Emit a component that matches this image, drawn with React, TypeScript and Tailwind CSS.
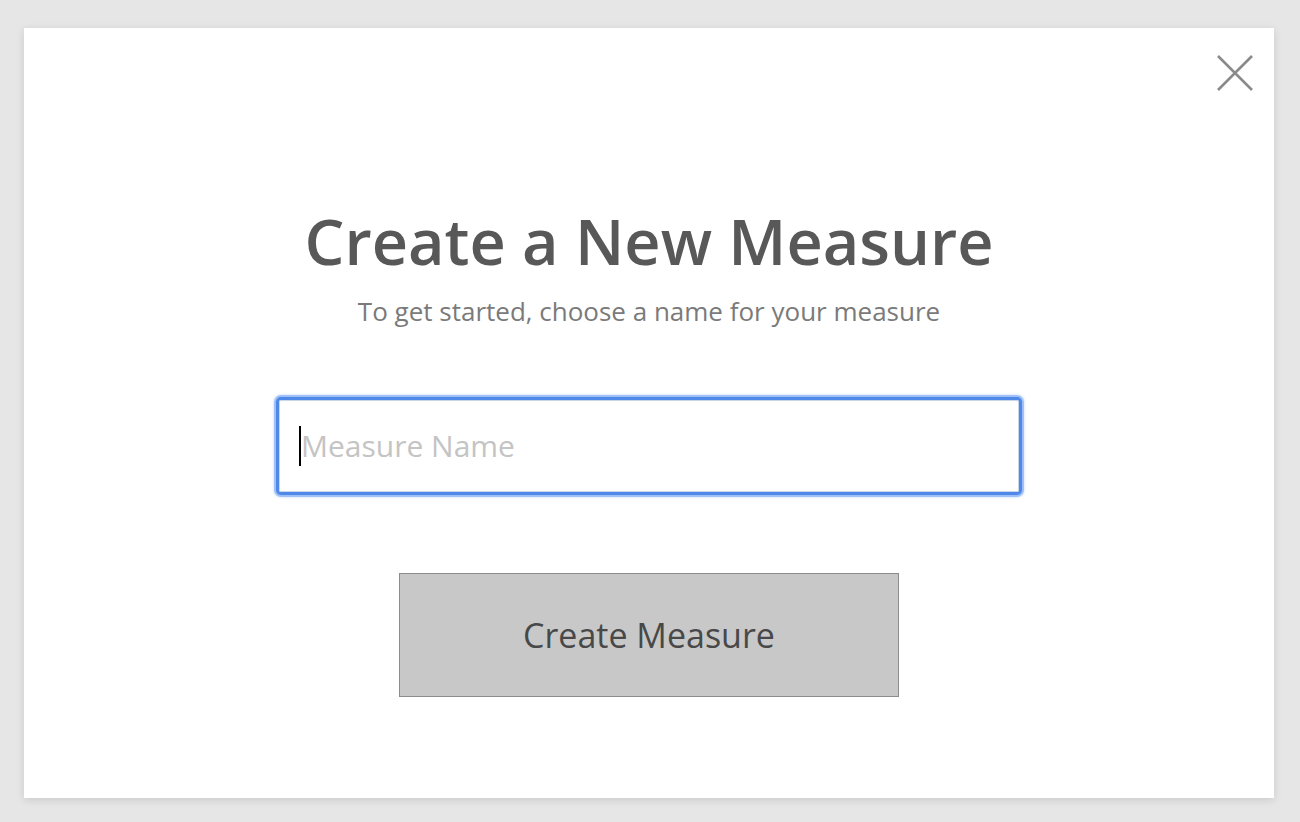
import React from "react";

export default function App() {
  return (
    <div
      className="w-[1300px] h-[822px] bg-[#e6e6e6] pt-[28px] pl-[24px]"
      style={{ fontFamily: '"Open Sans", "Liberation Sans", sans-serif' }}
    >
      <div className="relative w-[1250px] h-[770px] bg-white shadow-[0_2px_8px_rgba(0,0,0,0.12)] flex flex-col items-center">
        <button className="absolute right-[20px] top-[26px] w-[38px] h-[38px] flex items-center justify-center">
          <svg width="38" height="38" viewBox="0 0 38 38">
            <path d="M2 2 L36 36 M36 2 L2 36" stroke="#8a8a8a" strokeWidth="2.6" />
          </svg>
        </button>
        <h1 className="mt-[177px] text-[63px] leading-[72px] font-semibold text-[#585858]">
          Create a New Measure
        </h1>
        <p className="mt-[18px] text-[26px] leading-[32px] text-[#7a7a7a]">
          To get started, choose a name for your measure
        </p>
        <div className="mt-[70px] w-[746px] h-[98px] rounded-[5px] bg-white border-[3px] border-[#4f88e8] shadow-[0_0_0_2px_rgba(135,178,245,0.7),0_0_3px_2px_rgba(135,178,245,0.5)] flex items-center">
          <div className="w-full h-full border border-[#c9d6ea] rounded-[2px] flex items-center pl-[19px]">
            <div className="w-[2px] h-[40px] bg-black" />
            <span className="text-[30px] text-[#c4c4c4] leading-none">Measure Name</span>
          </div>
        </div>
        <button className="mt-[78px] w-[500px] h-[124px] bg-[#c8c8c8] border border-[#8c8c8c] text-[34px] text-[#484848]">
          Create Measure
        </button>
      </div>
    </div>
  );
}
